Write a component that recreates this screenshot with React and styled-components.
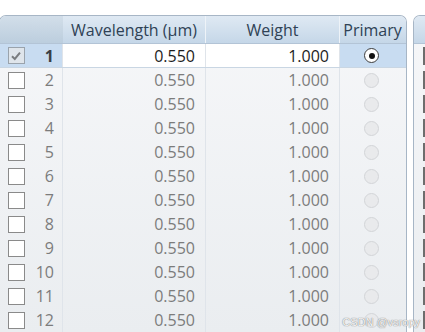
import React from 'react';
import styled, { createGlobalStyle } from 'styled-components';

const GlobalStyle = createGlobalStyle`
  html, body {
    margin: 0;
    padding: 0;
    background: #ffffff;
  }
  body {
    width: 425px;
    height: 332px;
    overflow: hidden;
    font-family: "Open Sans", "Noto Sans", sans-serif;
  }
`;

const rows = Array.from({ length: 12 }, (_, i) => ({
  id: i + 1,
  wavelength: '0.550',
  weight: '1.000',
}));

const COLS = '31px 32px 143px 134px 66px';

const App = () => {
  return (
    <Page>
      <GlobalStyle />
      <Table>
        <HeaderRow>
          <HeadCell $first $noLine />
          <HeadCell $first $noLine />
          <HeadCell>Wavelength (µm)</HeadCell>
          <HeadCell>Weight</HeadCell>
          <HeadCell $noLine>Primary</HeadCell>
        </HeaderRow>
        <Body>
          {rows.map((r) => {
            const active = r.id === 1;
            return (
              <Row key={r.id} $active={active}>
                <CheckCell $active={active}>
                  <Box $checked={active}>{active && <Tick />}</Box>
                </CheckCell>
                <NumCell $active={active}>{r.id}</NumCell>
                <ValueCell $active={active}>{r.wavelength}</ValueCell>
                <ValueCell $active={active}>{r.weight}</ValueCell>
                <RadioCell $active={active}>
                  <Radio $on={active} />
                </RadioCell>
              </Row>
            );
          })}
        </Body>
      </Table>
      <SidePanel>
        <SideHeader />
        <Body>
          {rows.map((r) => (
            <SideRow key={r.id}>
              <SideBox />
            </SideRow>
          ))}
        </Body>
      </SidePanel>
      <Watermark>CSDN @vsropy</Watermark>
    </Page>
  );
};

const Tick = () => (
  <svg width='12' height='12' viewBox='0 0 12 12'>
    <path d='M2 6.2 L4.8 9 L10 2.6' fill='none' stroke='#7a7d80' strokeWidth='2' />
  </svg>
);

const Page = styled.div`
  position: relative;
  display: flex;
  gap: 6px;
  padding-top: 15px;
  height: 317px;
  overflow: hidden;
`;

const Table = styled.div`
  flex: none;
  width: 406px;
  margin-left: -1px;
  border: 1px solid #a7b6c6;
  border-bottom: none;
  border-radius: 7px 7px 0 0;
  overflow: hidden;
  background: linear-gradient(#f6f7f9, #eaedf0);
`;

const HeaderRow = styled.div`
  display: grid;
  grid-template-columns: ${COLS};
  height: 27px;
  background: linear-gradient(#dfe9f3, #c5d7e8);
  border-bottom: 1px solid #b3c4d6;
`;

const HeadCell = styled.div`
  display: flex;
  align-items: center;
  justify-content: center;
  font-size: 16px;
  font-weight: 500;
  color: #2f4255;
  background: ${({ $first }) => ($first ? 'linear-gradient(#d2dee9, #bccede)' : 'transparent')};
  border-right: 1px solid ${({ $noLine }) => ($noLine ? 'transparent' : '#eef3f8')};
  white-space: nowrap;
`;

const Body = styled.div`
  display: flex;
  flex-direction: column;
`;

const Row = styled.div`
  display: grid;
  grid-template-columns: ${COLS};
  height: 24px;
  border-bottom: ${({ $active }) => ($active ? '1px solid #c9d6e3' : 'none')};
  box-sizing: border-box;
`;

const Cell = styled.div`
  display: flex;
  align-items: center;
  font-size: 16px;
  font-weight: 500;
  color: ${({ $active }) => ($active ? '#1d1d1d' : '#7c7c7c')};
`;

const CheckCell = styled(Cell)`
  justify-content: center;
  padding-left: 1px;
  background: ${({ $active }) => ($active ? '#c8dcf1' : 'transparent')};
`;

const NumCell = styled(Cell)`
  justify-content: flex-end;
  padding-right: 8px;
  font-weight: ${({ $active }) => ($active ? 700 : 500)};
  color: ${({ $active }) => ($active ? '#3a3f45' : '#7c7c7c')};
  background: ${({ $active }) => ($active ? '#c8dcf1' : 'transparent')};
  border-right: 1px solid #dfe4ea;
`;

const ValueCell = styled(Cell)`
  justify-content: flex-end;
  padding-right: 10px;
  background: ${({ $active }) => ($active ? '#ffffff' : 'transparent')};
  border-right: 1px solid #dfe4ea;
`;

const RadioCell = styled(Cell)`
  justify-content: center;
  padding-right: 3px;
  background: ${({ $active }) => ($active ? '#c8dcf1' : 'transparent')};
`;

const Box = styled.div`
  display: flex;
  align-items: center;
  justify-content: center;
  width: 15px;
  height: 15px;
  border: 1px solid ${({ $checked }) => ($checked ? '#9aa3ac' : '#8a8a8a')};
  background: ${({ $checked }) => ($checked ? '#dfe5eb' : '#ffffff')};
`;

const Radio = styled.div`
  position: relative;
  width: 13px;
  height: 13px;
  border-radius: 50%;
  border: 1px solid ${({ $on }) => ($on ? '#3c3c3c' : '#d3d5d8')};
  background: ${({ $on }) => ($on ? '#ffffff' : '#e9eaec')};

  &::after {
    content: '';
    display: ${({ $on }) => ($on ? 'block' : 'none')};
    position: absolute;
    left: 3.5px;
    top: 3.5px;
    width: 6px;
    height: 6px;
    border-radius: 50%;
    background: #111;
  }
`;

const SidePanel = styled.div`
  flex: none;
  width: 40px;
  border: 1px solid #a7b6c6;
  border-bottom: none;
  border-radius: 7px 7px 0 0;
  overflow: hidden;
  background: linear-gradient(#f6f7f9, #eaedf0);
`;

const SideHeader = styled.div`
  height: 27px;
  background: linear-gradient(#dfe9f3, #c5d7e8);
  border-bottom: 1px solid #b3c4d6;
`;

const SideRow = styled.div`
  display: flex;
  align-items: center;
  height: 24px;
  padding-left: 9px;
`;

const SideBox = styled.div`
  width: 14px;
  height: 14px;
  border: 2px solid #6d6d6d;
  background: #fafafa;
`;

const Watermark = styled.div`
  position: absolute;
  right: 5px;
  bottom: 4px;
  font-family: "Liberation Sans", sans-serif;
  font-size: 11px;
  color: rgba(255, 255, 255, 0.9);
  text-shadow: 0 0 1px #8a8a8a, 0 0 1px #8a8a8a;
`;

export default App;
